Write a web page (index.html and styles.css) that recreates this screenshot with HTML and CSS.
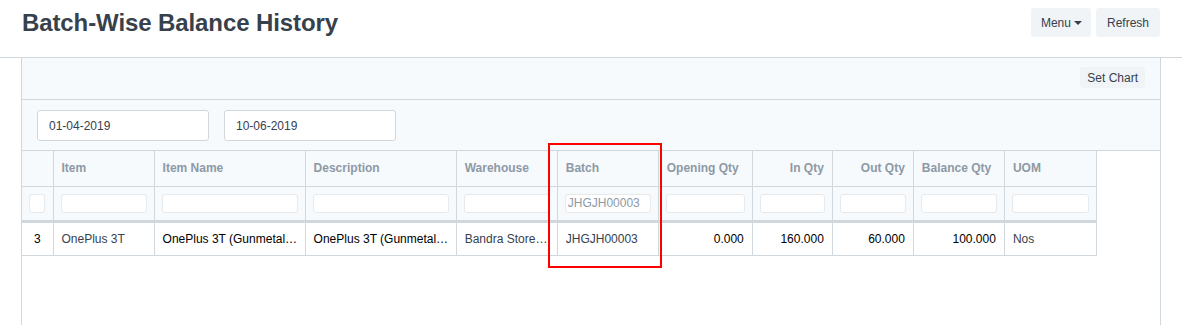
FILE: index.html
```html
<!DOCTYPE html>
<html>
<head>
<meta charset="utf-8">
<link rel="stylesheet" href="styles.css">
</head>
<body>
<header class="page-head">
  <h1 class="title">Batch-Wise Balance History</h1>
  <div class="actions">
    <button class="btn btn-menu">Menu <span class="caret"></span></button>
    <button class="btn">Refresh</button>
  </div>
</header>
<main class="layout">
  <div class="form-head">
    <button class="btn btn-xs">Set Chart</button>
  </div>
  <div class="filters">
    <div class="field">01-04-2019</div>
    <div class="field">10-06-2019</div>
  </div>
  <div class="table-wrap">
    <table class="grid">
      <colgroup>
        <col class="w0"><col class="w1"><col class="w2"><col class="w3"><col class="w4"><col class="w5"><col class="w6"><col class="w7"><col class="w8"><col class="w9"><col class="w10">
      </colgroup>
      <thead>
        <tr class="head">
          <th></th>
          <th>Item</th>
          <th>Item Name</th>
          <th>Description</th>
          <th>Warehouse</th>
          <th>Batch</th>
          <th>Opening Qty</th>
          <th class="num">In Qty</th>
          <th class="num">Out Qty</th>
          <th>Balance Qty</th>
          <th>UOM</th>
        </tr>
        <tr class="filter-row">
          <th><div class="fbox small"></div></th>
          <th><div class="fbox"></div></th>
          <th><div class="fbox"></div></th>
          <th><div class="fbox"></div></th>
          <th><div class="fbox"></div></th>
          <th><div class="fbox"><span class="ftext">JHGJH00003</span></div></th>
          <th><div class="fbox"></div></th>
          <th><div class="fbox"></div></th>
          <th><div class="fbox"></div></th>
          <th><div class="fbox"></div></th>
          <th><div class="fbox"></div></th>
        </tr>
      </thead>
      <tbody>
        <tr class="data">
          <td class="idx">3</td>
          <td class="muted">OnePlus 3T</td>
          <td>OnePlus 3T (Gunmetal…</td>
          <td>OnePlus 3T (Gunmetal…</td>
          <td class="muted">Bandra Store…</td>
          <td class="muted">JHGJH00003</td>
          <td class="num">0.000</td>
          <td class="num">160.000</td>
          <td class="num">60.000</td>
          <td class="num">100.000</td>
          <td class="muted">Nos</td>
        </tr>
      </tbody>
    </table>
    <div class="highlight"></div>
  </div>
</main>
</body>
</html>
```
FILE: styles.css
```css
* { box-sizing: border-box; }
html, body { margin: 0; padding: 0; background: #fff; }
body {
  font-family: "Liberation Sans", Arial, sans-serif;
  color: #36414c;
  height: 325px;
  overflow: hidden;
}
.page-head {
  height: 58px;
  border-bottom: 1px solid #d1d8dd;
  display: flex;
  justify-content: space-between;
  align-items: flex-start;
  padding: 0 22px;
}
.title {
  margin: 0;
  margin-top: 7px;
  font-size: 24px;
  font-weight: bold;
  color: #36414c;
  line-height: 32px;
  letter-spacing: -0.1px;
}
.actions {
  display: flex;
  gap: 5px;
  margin-top: 8px;
}
.btn {
  font-family: "Liberation Sans", Arial, sans-serif;
  font-size: 12px;
  color: #36414c;
  background: #f0f4f7;
  border: 0;
  border-radius: 3px;
  height: 29px;
  padding: 0 11px;
  display: inline-flex;
  align-items: center;
  gap: 3px;
}
.btn-menu { padding: 0 9px 0 10px; }
.caret {
  width: 0;
  height: 0;
  border-left: 4px solid transparent;
  border-right: 4px solid transparent;
  border-top: 4px solid #36414c;
  display: inline-block;
}
.btn-xs {
  height: 21px;
  padding: 0 7px;
}
.layout {
  margin: 0 21px;
  border-left: 1px solid #d1d8dd;
  border-right: 1px solid #d1d8dd;
  height: 267px;
}
.form-head {
  height: 42px;
  background: #f7fafc;
  border-bottom: 1px solid #d1d8dd;
  display: flex;
  justify-content: flex-end;
  align-items: flex-start;
  padding: 9px 15px 0 0;
}
.filters {
  height: 51px;
  background: #f7fafc;
  border-bottom: 1px solid #d1d8dd;
  display: flex;
  gap: 15px;
  padding: 10px 15px 0;
}
.field {
  width: 172px;
  height: 31px;
  background: #fff;
  border: 1px solid #d1d8dd;
  border-radius: 3px;
  font-size: 12px;
  color: #36414c;
  padding: 0 11px;
  display: flex;
  align-items: center;
}
.table-wrap {
  position: relative;
}
.grid {
  border-collapse: collapse;
  table-layout: fixed;
  width: 1075px;
  font-size: 12px;
}
.w0 { width: 31px; }
.w1 { width: 101px; }
.w2 { width: 151px; }
.w3 { width: 151px; }
.w4 { width: 101px; }
.w5 { width: 101px; }
.w6 { width: 94px; }
.w7 { width: 80px; }
.w8 { width: 81px; }
.w9 { width: 91px; }
.w10 { width: 92px; }
.grid th, .grid td {
  border: 1px solid #d1d8dd;
  padding: 0 8px;
  white-space: nowrap;
  overflow: hidden;
}
.grid tr > :first-child { border-left: 0; }
.grid thead tr:first-child th { border-top: 0; }
.head th {
  height: 35px;
  background: #f7fafc;
  color: #8d99a6;
  font-weight: bold;
  text-align: left;
}
.head th.num { text-align: right; }
.filter-row th {
  height: 35px;
  background: #f7fafc;
  border-bottom: 3px solid #d1d8dd;
  padding: 0 7px;
}
.fbox {
  height: 19px;
  background: #fff;
  border: 1px solid #e6eaed;
  border-radius: 3px;
  font-weight: normal;
  text-align: left;
  display: flex;
  align-items: center;
  padding: 0 2px;
}
.fbox.small { width: 16px; }
.ftext { color: #8d99a6; font-size: 12px; }
.data td {
  height: 34px;
  color: #000;
}
.data td.muted { color: #36414c; }
.data td.idx { text-align: center; padding: 0; }
.num { text-align: right; }
.highlight {
  position: absolute;
  left: 526px;
  top: -8px;
  width: 114px;
  height: 125px;
  border: 2px solid #f00;
  pointer-events: none;
}
```
